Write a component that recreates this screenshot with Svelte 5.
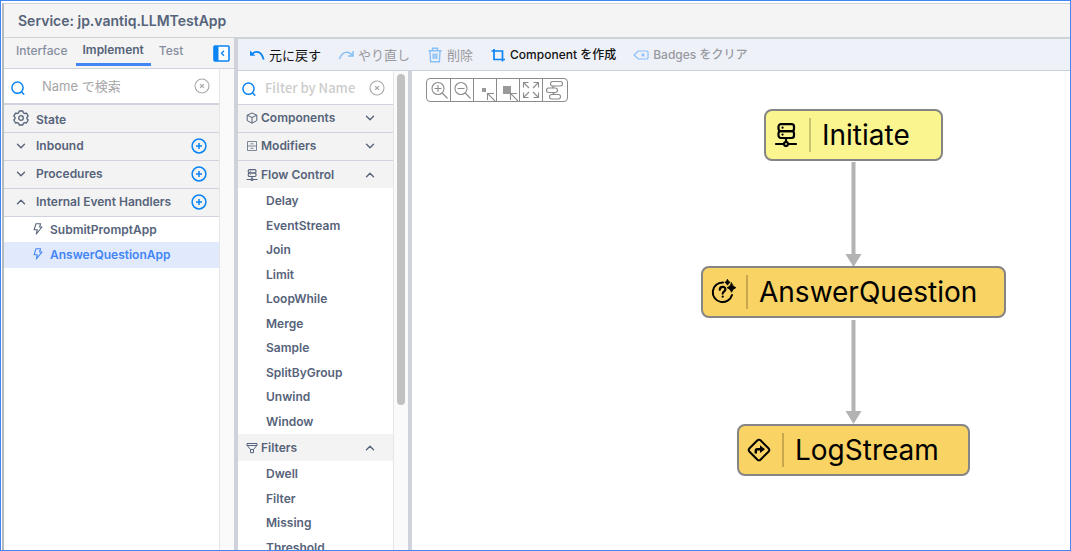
<script>
  const sections = [
    { name: 'Inbound', open: false, items: [] },
    { name: 'Procedures', open: false, items: [] },
    { name: 'Internal Event Handlers', open: true, items: ['SubmitPromptApp', 'AnswerQuestionApp'] }
  ];
  const palette = [
    { name: 'Components', icon: 'box', open: false, items: [] },
    { name: 'Modifiers', icon: 'drawer', open: false, items: [] },
    {
      name: 'Flow Control', icon: 'server', open: true,
      items: ['Delay', 'EventStream', 'Join', 'Limit', 'LoopWhile', 'Merge', 'Sample', 'SplitByGroup', 'Unwind', 'Window']
    },
    { name: 'Filters', icon: 'funnel', open: true, items: ['Dwell', 'Filter', 'Missing', 'Threshold'] }
  ];
  const actions = [
    { label: '元に戻す', icon: 'undo', off: false, kana: true },
    { label: 'やり直し', icon: 'redo', off: true, kana: true },
    { label: '削除', icon: 'trash', off: true, kana: true },
    { label: 'Component を作成', icon: 'crop', off: false, kana: false },
    { label: 'Badges をクリア', icon: 'tag', off: true, kana: false }
  ];
  const zooms = ['Zoom in', 'Zoom out', 'Small', 'Large', 'Fit', 'Layout'];
  const nodes = [
    { name: 'Initiate', icon: 'server', x: 352, y: 38, w: 179, start: true },
    { name: 'AnswerQuestion', icon: 'question', x: 289, y: 195, w: 305, start: false },
    { name: 'LogStream', icon: 'route', x: 325, y: 353, w: 233, start: false }
  ];
  let selected = $state('AnswerQuestionApp');
  let query = $state('');
  let filter = $state('');
</script>

{#snippet search()}
  <svg class="lens" width="16" height="16" viewBox="0 0 16 16" fill="none" stroke="#0a84f5" stroke-width="1.5" stroke-linecap="round"><circle cx="7.5" cy="7.7" r="5.6" /><path d="M11.6 12l2.2 2.3" /></svg>
{/snippet}
{#snippet clear()}
  <svg width="16" height="16" viewBox="0 0 16 16" fill="none" stroke="#a9a9ab" stroke-width="1.1"><circle cx="8" cy="8" r="7" /><path d="M6.1 6.1l3.8 3.8M9.9 6.1l-3.8 3.8" stroke-width="1.3" /></svg>
{/snippet}
{#snippet chevron(open)}
  <svg width="10" height="10" viewBox="0 0 10 10" fill="none" stroke="#56637a" stroke-width="1.4" stroke-linecap="round" stroke-linejoin="round"><path d={open ? 'M1.5 6.7L5 3.3l3.5 3.4' : 'M1.5 3.3L5 6.7l3.5-3.4'} /></svg>
{/snippet}
{#snippet server(size)}
  <svg width={size} height={size} viewBox="0 0 24 24" fill="none" stroke="currentColor" stroke-width="2.2" stroke-linecap="round"><rect x="4.500" y="1.200" width="15.500" height="6.900" rx="2.400" /><rect x="4.500" y="8.100" width="15.500" height="6.900" rx="2.400" /><path d="M8.500 4.700h.1M8.500 11.600h.1M12 15v3.500M2 21h7.500M14.500 21H22" /><circle cx="12" cy="21" r="2" /></svg>
{/snippet}

<div class="app">
  <header><h1>Service: jp.vantiq.LLMTestApp</h1></header>
  <div class="body">
    <aside class="side">
      <nav class="tabs">
        <button>Interface</button>
        <button class="on">Implement</button>
        <button>Test</button>
        <button class="collapse" aria-label="Collapse panel">
          <svg width="17" height="17" viewBox="0 0 17 17"><rect x="1" y="1" width="15" height="15" rx="1" fill="#fff" stroke="#0a84f5" stroke-width="1.6" /><path d="M1 1h4.5v15H1z" fill="#0a84f5" /><path d="M11 5.8L8.5 8.3l2.5 2.5" fill="none" stroke="#0a84f5" stroke-width="1.4" /></svg>
        </button>
      </nav>
      <div class="scroll">
        <div class="list">
          <div class="search">
            {@render search()}
            <input type="text" aria-label="Name で検索" placeholder="Name で検索" bind:value={query} />
            <button aria-label="Clear search" onclick={() => (query = '')}>{@render clear()}</button>
          </div>
          <div class="row state">
            <span class="gear"><svg width="16" height="16" viewBox="0 0 16 16" fill="none" stroke="#56637a" stroke-width="1.3" stroke-linejoin="round"><path d="M6.2 1h3.6l.6 1.9 1.1.6 2-.4 1.7 3-1.3 1.4v1.1l1.3 1.4-1.7 3-2-.4-1.1.6-.6 1.8H6.2l-.6-1.8-1.1-.6-2 .4-1.7-3 1.3-1.4V7.500L.8 6.100l1.700-3 2 .4 1.100-.6z" /><circle cx="8" cy="8" r="2.300" /></svg></span>
            <span class="label">State</span>
          </div>
          {#each sections as s}
            <div class="row">
              <button class="toggle" aria-expanded={s.open}><span class="mark">{@render chevron(s.open)}</span><span class="label">{s.name}</span></button>
              <button class="add" aria-label={'Add ' + s.name}>
                <svg width="16" height="16" viewBox="0 0 16 16" fill="none" stroke="#0a84f5" stroke-width="1.5"><circle cx="8" cy="8" r="6.9" /><path d="M8 5v6M5 8h6" stroke-width="1.5" /></svg>
              </button>
            </div>
            {#each s.items as item}
              <button class="leaf" class:sel={item === selected} onclick={() => (selected = item)}>
                <svg width="10" height="12" viewBox="0 0 10 12" fill="none" stroke="currentColor" stroke-width="1.1" stroke-linejoin="round"><path d="M3 .7h4.600L6.600 4H9L3.300 11l1-4.300H1.200z" /></svg>
                {item}
              </button>
            {/each}
          {/each}
        </div>
      </div>
    </aside>

    <main>
      <div class="toolbar">
        {#each actions as a}
          <button class:off={a.off} class:kana={a.kana}>
            <svg width="16" height="16" viewBox="0 0 16 16" fill="none" stroke="#0a84f5" stroke-width="1.6">
              {#if a.icon === 'undo'}
                <path d="M1 3.500v5.300h5.300z" fill="#0a84f5" stroke="none" /><path d="M3 7.200C6.500 3.300 12.500 4 14.600 12.500" stroke-width="1.800" />
              {:else if a.icon === 'redo'}
                <path d="M15 4v5H10M14.500 8.500C11 3.500 4 4 1.500 12" stroke-width="1.500" />
              {:else if a.icon === 'trash'}
                <path d="M1.500 3.800h13M5.500 3.500V1.200h5v2.300M3 4l.6 10.800h8.800L13 4M6.200 6.500v5.500M8 6.500v5.500M9.800 6.500v5.500" stroke-width="1.400" />
              {:else if a.icon === 'crop'}
                <path d="M4 2v10.500h11M1.500 4h11v10.500" stroke-width="1.700" />
              {:else}
                <path d="M5.300 4h8.500c.7 0 1.200.4 1.200 1.200v5.600c0 .8-.5 1.200-1.200 1.200H5.300L1 8z" stroke-width="1.200" /><path d="M8.600 6.600l2.800 2.800M11.400 6.600L8.600 9.400" stroke-width="1.200" />
              {/if}
            </svg>
            {a.label}
          </button>
        {/each}
      </div>
      <div class="work">
        <section class="palette">
          <div class="list">
            <div class="search">
              {@render search()}
              <input type="text" aria-label="Filter by Name" placeholder="Filter by Name" bind:value={filter} />
              <button aria-label="Clear filter" onclick={() => (filter = '')}>{@render clear()}</button>
            </div>
            {#each palette as g}
              <button class="group" aria-expanded={g.open}>
                {#if g.icon === 'server'}
                  {@render server(12)}
                {:else}
                  <svg width="12" height="12" viewBox="0 0 12 12" fill="none" stroke="currentColor" stroke-width="1" stroke-linejoin="round">
                    {#if g.icon === 'box'}
                      <path d="M6 1l4.800 2.200v5.400L6 11.200 1.200 8.600V3.200zM1.200 3.200L6 5.500l4.800-2.300M6 5.500v5.700" />
                    {:else if g.icon === 'drawer'}
                      <path d="M1.500 1.500h9v9h-9zM1.500 6h9M4.500 3.800h3M4.500 8.300h3" opacity=".75" />
                    {:else}
                      <path d="M1 1.500h10v1.800L7.500 7.500v3.200h-3V7.500L1 3.300zM1 3.500h10M4.500 7.500h3" />
                    {/if}
                  </svg>
                {/if}
                <span>{g.name}</span>
                {@render chevron(g.open)}
              </button>
              {#if g.items.length}
                <ul>
                  {#each g.items as item}<li>{item}</li>{/each}
                </ul>
              {/if}
            {/each}
          </div>
          <div class="track"><div class="thumb"></div></div>
        </section>

        <section class="canvas">
          <div class="zoom">
            {#each zooms as z, i}
              <button aria-label={z}>
                <svg width="22" height="22" viewBox="0 0 22 22" fill="none" stroke="#8c8c8c" stroke-width="1.100">
                  {#if i < 2}
                    <circle cx="10" cy="9.500" r="6" /><path d="M14.300 14l5.200 5.500M6.500 9.500h7" />
                    {#if i === 0}<path d="M10 6v7" />{/if}
                  {:else if i === 2}
                    <path d="M8 9h4v4h-4z" fill="#999" stroke="none" /><path d="M13.500 21v-6.500h6.500M13.700 14.700l7.300 7.300" />
                  {:else if i === 3}
                    <path d="M6 7h8v8h-8z" fill="#999" stroke="none" /><path d="M13.500 21v-6.500h6.500M13.700 14.700l7.300 7.300" />
                  {:else if i === 4}
                    <path d="M3.500 8.500v-5h5M3.500 3.500l5.500 5.500M13.500 3.500h5v5M18.500 3.500L13 9M3.500 13.500v5h5M3.500 18.500L9 13M13.500 18.500h5v-5M18.500 18.500L13 13" />
                  {:else}
                    <rect x="7.500" y="2.500" width="12" height="4.500" rx="2.200" /><rect x="3.500" y="9" width="11" height="4.500" rx="2.200" /><rect x="6.500" y="15.500" width="11" height="4.500" rx="2.200" /><path d="M11 7L9 9M9.500 13.500l2 2" />
                  {/if}
                </svg>
              </button>
            {/each}
          </div>
          <svg class="edges" width="30" height="360" viewBox="0 0 30 360" fill="#b3b3b3">
            <path d="M13.500 53h4v92h6L15.500 158 7.500 145h6z" />
            <path d="M13.500 211h4v91h6L15.500 315 7.500 302h6z" />
          </svg>
          {#each nodes as n}
            <div class="node" class:start={n.start} style={`left:${n.x}px;top:${n.y}px;width:${n.w}px`}>
              <span class="pic">
                {#if n.icon === 'server'}
                  {@render server(24)}
                {:else if n.icon === 'question'}
                  <svg width="26" height="26" viewBox="0 0 26 26" fill="none" stroke="#000" stroke-width="2" stroke-linecap="round"><path d="M12 3.500A9.800 9.800 0 1 0 21 16" /><path d="M8.800 10.800c0-4 6-3.800 5.600-.2-.2 1.800-2.700 1.800-2.700 4M11.700 17.600v.1" stroke-width="2.200" /><path d="M16.500 .5q.7 2.300 2.700 2.900-2 .6-2.700 2.800-.7-2.200-2.700-2.800Q15.800 2.800 16.500 .5zM20.500 4q1 3.700 4.400 4.700Q21.500 9.700 20.500 13.300q-1-3.600-4.400-4.600Q19.500 7.700 20.500 4z" fill="#000" stroke-width=".8" /></svg>
                {:else}
                  <svg width="24" height="24" viewBox="0 0 24 24" fill="none" stroke="#000" stroke-width="2" stroke-linejoin="round"><path d="M10.500 2.300q1.500-1.200 3 0l8.200 8.200q1.200 1.500 0 3l-8.200 8.200q-1.500 1.200-3 0l-8.200-8.200q-1.200-1.500 0-3z" /><path d="M8.800 15.500v-3q0-1.300 1.300-1.300H14" stroke-width="2.400" /><path d="M13 7.300l5 3.900-5 3.800z" fill="#000" stroke="none" /></svg>
                {/if}
              </span>
              <span class="title">{n.name}</span>
            </div>
          {/each}
        </section>
      </div>
    </main>
  </div>
</div>

<style>
  :global(body) { background: #fff; }
  * { box-sizing: border-box; }
  .app {
    height: 100vh; display: flex; flex-direction: column; overflow: hidden;
    border: 1px solid #4285f4; font: 600 12px/20px Inter, "Noto Sans CJK JP", sans-serif; color: #56637a;
  }
  button { font: inherit; color: inherit; background: none; border: 0; padding: 0; margin: 0; text-align: left; }
  svg { display: block; flex: none; }
  header, .body { border-left: 2px solid #b5b9c2; margin-left: 1px; }
  header { height: 36px; margin-top: 2px; flex: none; display: flex; align-items: center; padding-left: 14px; background: #f4f4f4; border-top: 1px solid #d0d1d8; border-bottom: 1px solid #cfd1d8; }
  h1 { margin: 0; font-size: 14px; line-height: 20px; font-weight: 600; }
  .body { flex: 1; min-height: 0; display: flex; margin-top: -2px; }
  .side { flex: 0 0 230px; min-width: 0; display: flex; flex-direction: column; border-top: 1px solid #cfd1d8; }
  .tabs { height: 31px; flex: none; display: flex; align-items: flex-start; padding: 0 4px; background: #f4f4f4; border-bottom: 1px solid #d0d2dc; }
  .tabs button { height: 28px; padding: 2px 8px 4px; font-weight: 500; line-height: 20px; color: #858e9e; }
  .tabs .on { font-weight: 600; color: #56637a; border-bottom: 3px solid #4285f4; padding: 2px 7px 3px; }
  .tabs .collapse { margin-left: auto; padding: 0; align-self: center; height: auto; }
  .scroll { flex: 1; background: #fafafa; padding-right: 15px; min-height: 0; }
  .list { background: #fff; height: 100%; min-width: 0; box-shadow: 1px 0 0 #e6e6e8; overflow: hidden; }
  .search { height: 36px; display: flex; align-items: center; padding: 0 9px 0 6px; border-bottom: 2px solid #d0d2dc; }
  .search .lens { margin-top: 4px; }
  .search input { flex: 1; min-width: 0; border: 0; outline: 0; padding: 0; margin-left: 16px; background: none; font: 400 13px/20px Inter, "Noto Sans CJK JP", sans-serif; color: #56637a; }
  .search input::placeholder { color: #a6a6a8; opacity: 1; }
  .row { height: 28px; display: flex; align-items: center; background: #f3f3f3; border-bottom: 1px solid #d0d2dc; padding: 0 12px 1px 0; }
  .state { padding-left: 9px; gap: 7px; }
  .state .label { padding-top: 4px; }
  .toggle { flex: 1; display: flex; align-items: center; }
  .mark { width: 32px; padding-left: 12px; }
  .leaf { width: 100%; height: 25px; display: flex; align-items: center; gap: 7px; padding-left: 29px; }
  .leaf + .leaf { height: 26px; }
  .leaf svg { margin-bottom: 2px; }
  .sel { background: #e1eafc; color: #4285f4; }
  main { flex: 1; min-width: 0; display: flex; flex-direction: column; border-left: 4px solid #cfd2da; }
  .toolbar { height: 34px; flex: none; display: flex; align-items: center; gap: 17px; padding-left: 11px; background: #eff1f9; border-top: 2px solid #cfd2d8; border-bottom: 1px solid #cdd0dc; color: #111; font-weight: 500; }
  .toolbar button { display: flex; align-items: center; gap: 4px; white-space: nowrap; }
  .toolbar .kana { font-size: 13px; font-weight: 400; }
  .off { color: #98999e; }
  .off svg { opacity: .45; }
  .work { flex: 1; min-height: 0; display: flex; }
  .palette { flex: 0 0 174px; min-width: 0; display: flex; border-right: 4px solid #cfd2da; background: #fafafa; }
  .palette .list { flex: 1; }
  .palette .search { height: 34px; padding: 0 8px 0 3px; border-bottom-width: 1px; }
  .palette .search .lens { margin-top: 2px; }
  .palette .search input { margin-left: 8px; font-family: "Noto Sans CJK JP", sans-serif; font-weight: 500; }
  .palette .search input::placeholder { color: #ccc; }
  .track { width: 15px; padding: 3px 3px 0 4px; }
  .thumb { height: 331px; border-radius: 4px; background: #c1c1c1; }
  .group { width: 100%; height: 28px; display: flex; align-items: center; gap: 3px; padding: 0 18px 1px 8px; background: #f3f3f3; border-bottom: 1px solid #d0d2dc; }
  .group[aria-expanded="true"] { height: 27px; padding-bottom: 0; border-bottom: 0; }
  .group span { flex: 1; }
  ul { list-style: none; margin: 0; padding: 0 0 1px; }
  li { height: 25px; line-height: 25px; padding-left: 28px; }
  li:nth-child(even) { height: 24px; }
  .canvas { flex: 1; min-width: 0; position: relative; background: #fff; padding: 7px 14px; overflow: hidden; }
  .zoom { display: inline-flex; border: 1px solid #8c8c8c; border-radius: 4px; padding-right: 2px; }
  .zoom button:first-child { padding-left: 1px; }
  .zoom button + button { border-left: 1px solid #8c8c8c; }
  .edges { position: absolute; left: 426px; top: 38px; }
  .node { position: absolute; height: 52px; display: flex; align-items: center; border: 2px solid #858585; border-radius: 8px; background: #f9d363; color: #000; font-size: 28px; font-weight: 400; line-height: 36px; }
  .start { background: #fbf58f; }
  .pic { width: 45px; height: 34px; padding-left: 8px; display: flex; align-items: center; border-right: 2px solid rgb(0 0 0 / .2); }
  .title { padding-left: 11px; }
</style>
